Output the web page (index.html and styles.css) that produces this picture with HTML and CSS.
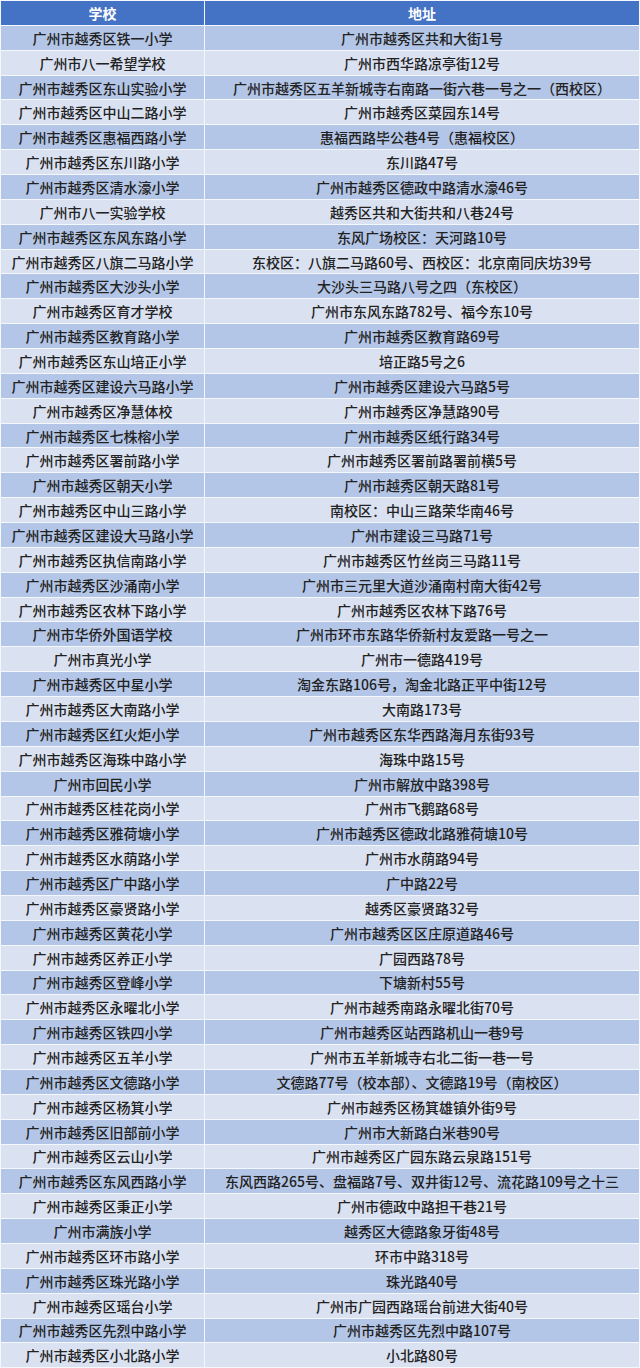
FILE: index.html
```html
<!DOCTYPE html>
<html lang="zh-CN">
<head>
<meta charset="utf-8">
<title>广州市越秀区学校地址</title>
<link rel="stylesheet" href="styles.css">
</head>
<body>
<table class="schools">
<thead>
<tr><th class="c-name">学校</th><th class="c-addr">地址</th></tr>
</thead>
<tbody>
<tr><td>广州市越秀区铁一小学</td><td>广州市越秀区共和大街1号</td></tr>
<tr><td>广州市八一希望学校</td><td>广州市西华路凉亭街12号</td></tr>
<tr><td>广州市越秀区东山实验小学</td><td>广州市越秀区五羊新城寺右南路一街六巷一号之一（西校区）</td></tr>
<tr><td>广州市越秀区中山二路小学</td><td>广州市越秀区菜园东14号</td></tr>
<tr><td>广州市越秀区惠福西路小学</td><td>惠福西路毕公巷4号（惠福校区）</td></tr>
<tr><td>广州市越秀区东川路小学</td><td>东川路47号</td></tr>
<tr><td>广州市越秀区清水濠小学</td><td>广州市越秀区德政中路清水濠46号</td></tr>
<tr><td>广州市八一实验学校</td><td>越秀区共和大街共和八巷24号</td></tr>
<tr><td>广州市越秀区东风东路小学</td><td>东风广场校区：天河路10号</td></tr>
<tr><td>广州市越秀区八旗二马路小学</td><td>东校区：八旗二马路60号、西校区：北京南同庆坊39号</td></tr>
<tr><td>广州市越秀区大沙头小学</td><td>大沙头三马路八号之四（东校区）</td></tr>
<tr><td>广州市越秀区育才学校</td><td>广州市东风东路782号、福今东10号</td></tr>
<tr><td>广州市越秀区教育路小学</td><td>广州市越秀区教育路69号</td></tr>
<tr><td>广州市越秀区东山培正小学</td><td>培正路5号之6</td></tr>
<tr><td>广州市越秀区建设六马路小学</td><td>广州市越秀区建设六马路5号</td></tr>
<tr><td>广州市越秀区净慧体校</td><td>广州市越秀区净慧路90号</td></tr>
<tr><td>广州市越秀区七株榕小学</td><td>广州市越秀区纸行路34号</td></tr>
<tr><td>广州市越秀区署前路小学</td><td>广州市越秀区署前路署前横5号</td></tr>
<tr><td>广州市越秀区朝天小学</td><td>广州市越秀区朝天路81号</td></tr>
<tr><td>广州市越秀区中山三路小学</td><td>南校区：中山三路荣华南46号</td></tr>
<tr><td>广州市越秀区建设大马路小学</td><td>广州市建设三马路71号</td></tr>
<tr><td>广州市越秀区执信南路小学</td><td>广州市越秀区竹丝岗三马路11号</td></tr>
<tr><td>广州市越秀区沙涌南小学</td><td>广州市三元里大道沙涌南村南大街42号</td></tr>
<tr><td>广州市越秀区农林下路小学</td><td>广州市越秀区农林下路76号</td></tr>
<tr><td>广州市华侨外国语学校</td><td>广州市环市东路华侨新村友爱路一号之一</td></tr>
<tr><td>广州市真光小学</td><td>广州市一德路419号</td></tr>
<tr><td>广州市越秀区中星小学</td><td>淘金东路106号，淘金北路正平中街12号</td></tr>
<tr><td>广州市越秀区大南路小学</td><td>大南路173号</td></tr>
<tr><td>广州市越秀区红火炬小学</td><td>广州市越秀区东华西路海月东街93号</td></tr>
<tr><td>广州市越秀区海珠中路小学</td><td>海珠中路15号</td></tr>
<tr><td>广州市回民小学</td><td>广州市解放中路398号</td></tr>
<tr><td>广州市越秀区桂花岗小学</td><td>广州市飞鹅路68号</td></tr>
<tr><td>广州市越秀区雅荷塘小学</td><td>广州市越秀区德政北路雅荷塘10号</td></tr>
<tr><td>广州市越秀区水荫路小学</td><td>广州市水荫路94号</td></tr>
<tr><td>广州市越秀区广中路小学</td><td>广中路22号</td></tr>
<tr><td>广州市越秀区豪贤路小学</td><td>越秀区豪贤路32号</td></tr>
<tr><td>广州市越秀区黄花小学</td><td>广州市越秀区区庄原道路46号</td></tr>
<tr><td>广州市越秀区养正小学</td><td>广园西路78号</td></tr>
<tr><td>广州市越秀区登峰小学</td><td>下塘新村55号</td></tr>
<tr><td>广州市越秀区永曜北小学</td><td>广州市越秀南路永曜北街70号</td></tr>
<tr><td>广州市越秀区铁四小学</td><td>广州市越秀区站西路机山一巷9号</td></tr>
<tr><td>广州市越秀区五羊小学</td><td>广州市五羊新城寺右北二街一巷一号</td></tr>
<tr><td>广州市越秀区文德路小学</td><td>文德路77号（校本部）、文德路19号（南校区）</td></tr>
<tr><td>广州市越秀区杨箕小学</td><td>广州市越秀区杨箕雄镇外街9号</td></tr>
<tr><td>广州市越秀区旧部前小学</td><td>广州市大新路白米巷90号</td></tr>
<tr><td>广州市越秀区云山小学</td><td>广州市越秀区广园东路云泉路151号</td></tr>
<tr><td>广州市越秀区东风西路小学</td><td>东风西路265号、盘福路7号、双井街12号、流花路109号之十三</td></tr>
<tr><td>广州市越秀区秉正小学</td><td>广州市德政中路担干巷21号</td></tr>
<tr><td>广州市满族小学</td><td>越秀区大德路象牙街48号</td></tr>
<tr><td>广州市越秀区环市路小学</td><td>环市中路318号</td></tr>
<tr><td>广州市越秀区珠光路小学</td><td>珠光路40号</td></tr>
<tr><td>广州市越秀区瑶台小学</td><td>广州市广园西路瑶台前进大街40号</td></tr>
<tr><td>广州市越秀区先烈中路小学</td><td>广州市越秀区先烈中路107号</td></tr>
<tr><td>广州市越秀区小北路小学</td><td>小北路80号</td></tr>
</tbody>
</table>
</body>
</html>
```
FILE: styles.css
```css
html, body {
  margin: 0;
  padding: 0;
  background: #ffffff;
}

.schools {
  width: 640px;
  border-collapse: collapse;
  table-layout: fixed;
  font-family: "Noto Sans CJK SC", "Noto Sans", sans-serif;
  font-size: 14px;
  color: #222222;
}

.schools tr {
  height: 24.87px;
}

.schools th,
.schools td {
  padding: 0 2px;
  text-align: center;
  vertical-align: middle;
  white-space: nowrap;
  overflow: hidden;
  line-height: 16px;
  border: 1px solid #f4f7fc;
  font-weight: 500;
}

.schools .c-name {
  width: 199px;
}

.schools th {
  background: #4472c4;
  color: #ffffff;
  font-weight: 600;
}

.schools tbody tr:nth-child(odd) td {
  background: #b4c6e7;
}

.schools tbody tr:nth-child(even) td {
  background: #dae1f1;
}
```
